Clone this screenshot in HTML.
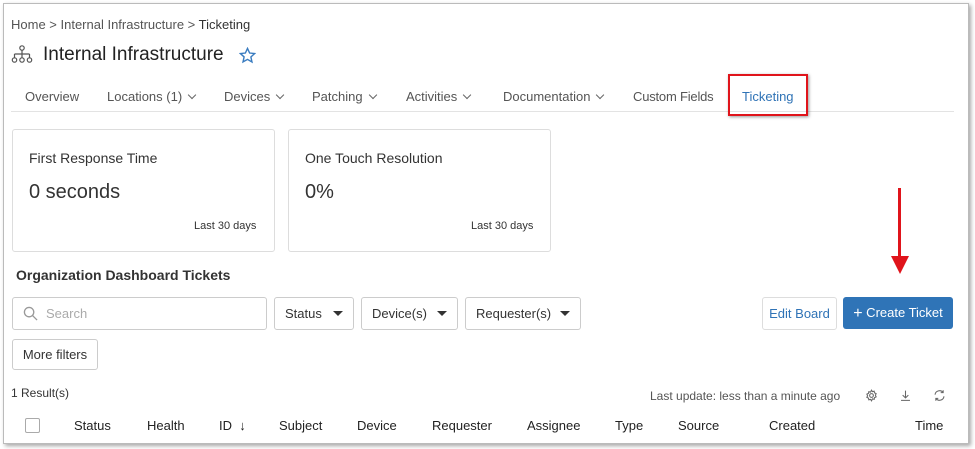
<!DOCTYPE html>
<html><head><style>
body{margin:0;width:975px;height:449px;background:#fff;font-family:"Liberation Sans",sans-serif;color:#333;overflow:hidden;position:relative}
.frame{position:absolute;left:3px;top:3px;width:964px;height:439px;border:1px solid #bbb;box-shadow:2px 2px 4px rgba(0,0,0,.35);background:#fff}
.a{position:absolute;white-space:nowrap}
.card{position:absolute;border:1px solid #ddd;border-radius:3px;background:#fff}
.btn{position:absolute;border:1px solid #ccc;border-radius:3px;background:#fff;font-size:13px;box-sizing:border-box;white-space:nowrap;line-height:15px}
.tab{font-size:13px;color:#555;top:89px}
.th{font-size:13px;color:#222;top:418px}
.chev{display:inline-block;width:5px;height:5px;border-right:1.2px solid #666;border-bottom:1.2px solid #666;transform:rotate(45deg);margin-left:7px;position:relative;top:-3px}
.dd{position:absolute;right:10px;top:13px;width:0;height:0;border-left:5px solid transparent;border-right:5px solid transparent;border-top:5px solid #333}
</style></head><body>
<div class="frame"></div>
<div class="a" style="left:11px;top:17px;font-size:13px;color:#555">Home &gt; Internal Infrastructure &gt; <span style="color:#333">Ticketing</span></div>
<svg class="a" style="left:11px;top:45px" width="22" height="20" viewBox="0 0 22 20" fill="none" stroke="#555" stroke-width="1.2"><circle cx="11" cy="3" r="2.2"/><path d="M11 5.2V9M3.5 9H18.5M3.5 9v3.5M11 9v3.5M18.5 9v3.5"/><circle cx="3.5" cy="15" r="2.2"/><circle cx="11" cy="15" r="2.2"/><circle cx="18.5" cy="15" r="2.2"/></svg>
<div class="a" style="left:43px;top:44px;font-size:19px;color:#222">Internal Infrastructure</div>
<svg class="a" style="left:239px;top:47px" width="17" height="17" viewBox="0 0 24 24" fill="none" stroke="#3a7cc0" stroke-width="2"><path d="M12 2l3 6.5 7 .8-5.2 4.8 1.5 7L12 17.5 5.7 21l1.5-7L2 9.3l7-.8z"/></svg>
<div class="a tab" style="left:25px">Overview</div>
<div class="a tab" style="left:107px">Locations (1)<span class="chev"></span></div>
<div class="a tab" style="left:224px">Devices<span class="chev"></span></div>
<div class="a tab" style="left:312px">Patching<span class="chev"></span></div>
<div class="a tab" style="left:406px">Activities<span class="chev"></span></div>
<div class="a tab" style="left:503px">Documentation<span class="chev"></span></div>
<div class="a tab" style="left:633px;letter-spacing:-0.2px">Custom Fields</div>
<div class="a" style="left:11px;top:111px;width:943px;border-top:1px solid #e3e3e3"></div>
<div class="a" style="left:728px;top:74px;width:80px;height:42px;border:2px solid #e0141b;box-sizing:border-box;box-shadow:1px 1px 3px rgba(0,0,0,.4)"></div>
<div class="a tab" style="left:742px;color:#2f73b6">Ticketing</div>
<div class="card" style="left:12px;top:129px;width:261px;height:121px"></div>
<div class="a" style="left:29px;top:150px;font-size:14px">First Response Time</div>
<div class="a" style="left:29px;top:181px;font-size:20px">0 seconds</div>
<div class="a" style="left:194px;top:220px;font-size:11px">Last 30 days</div>
<div class="card" style="left:288px;top:129px;width:261px;height:121px"></div>
<div class="a" style="left:305px;top:150px;font-size:14px">One Touch Resolution</div>
<div class="a" style="left:305px;top:181px;font-size:20px">0%</div>
<div class="a" style="left:471px;top:220px;font-size:11px">Last 30 days</div>
<div class="a" style="left:16px;top:267px;font-size:14px;font-weight:bold;color:#333">Organization Dashboard Tickets</div>
<div class="btn" style="left:12px;top:297px;width:255px;height:33px"></div>
<svg class="a" style="left:23px;top:306px" width="15" height="15" viewBox="0 0 16 16" fill="none" stroke="#999" stroke-width="1.4"><circle cx="6.5" cy="6.5" r="5"/><path d="M10.2 10.2L15 15"/></svg>
<div class="a" style="left:46px;top:306px;font-size:13px;color:#aaa">Search</div>
<div class="btn" style="left:274px;top:297px;width:80px;height:33px;padding:8px 10px">Status<span class="dd"></span></div>
<div class="btn" style="left:361px;top:297px;width:97px;height:33px;padding:8px 10px">Device(s)<span class="dd"></span></div>
<div class="btn" style="left:465px;top:297px;width:116px;height:33px;padding:8px 10px">Requester(s)<span class="dd"></span></div>
<div class="btn" style="left:762px;top:297px;width:75px;height:33px;padding:8px 0;text-align:center;color:#2f73b6;border-color:#ddd">Edit Board</div>
<div class="a" style="left:843px;top:297px;width:110px;height:32px;background:#2f74b7;border-radius:3px;color:#fff;font-size:13px;line-height:32px;text-align:center"><span style="font-size:16px;position:relative;top:1px">+</span> Create Ticket</div>
<div class="a" style="left:898px;top:188px;width:3px;height:70px;background:#e0141b"></div>
<div class="a" style="left:891px;top:256px;width:0;height:0;border-left:9px solid transparent;border-right:9px solid transparent;border-top:18px solid #e0141b"></div>
<div class="btn" style="left:12px;top:339px;width:86px;height:31px;padding:7px 0;text-align:center">More filters</div>
<div class="a" style="left:11px;top:386px;font-size:12px">1 Result(s)</div>
<div class="a" style="left:650px;top:389px;font-size:12px;color:#555">Last update: less than a minute ago</div>
<svg class="a" style="left:865px;top:389px" width="13" height="13" viewBox="0 0 16 16" fill="none" stroke="#666" stroke-width="1.3"><circle cx="8" cy="8" r="2.3"/><path d="M8 1.5l1.2 1.8 2.1-.6.4 2.1 2 .9-.9 2 .9 2-2 .9-.4 2.1-2.1-.6L8 14.5l-1.2-1.8-2.1.6-.4-2.1-2-.9.9-2-.9-2 2-.9.4-2.1 2.1.6z"/></svg>
<svg class="a" style="left:899px;top:389px" width="13" height="13" viewBox="0 0 16 16" fill="none" stroke="#666" stroke-width="1.3"><path d="M8 2v9M4.5 7.5L8 11l3.5-3.5M2.5 14h11"/></svg>
<svg class="a" style="left:933px;top:389px" width="13" height="13" viewBox="0 0 16 16" fill="none" stroke="#666" stroke-width="1.3"><path d="M2.5 7A5.5 5.5 0 0 1 12.5 4.5M13.5 9A5.5 5.5 0 0 1 3.5 11.5M12.5 1.5v3h-3M3.5 14.5v-3h3"/></svg>
<div class="a" style="left:25px;top:418px;width:13px;height:13px;border:1px solid #aaa;border-radius:2px"></div>
<div class="a th" style="left:74px">Status</div>
<div class="a th" style="left:147px">Health</div>
<div class="a th" style="left:219px">ID &nbsp;↓</div>
<div class="a th" style="left:279px">Subject</div>
<div class="a th" style="left:357px">Device</div>
<div class="a th" style="left:432px">Requester</div>
<div class="a th" style="left:527px">Assignee</div>
<div class="a th" style="left:615px">Type</div>
<div class="a th" style="left:678px">Source</div>
<div class="a th" style="left:769px">Created</div>
<div class="a th" style="left:915px">Time</div>
</body></html>
